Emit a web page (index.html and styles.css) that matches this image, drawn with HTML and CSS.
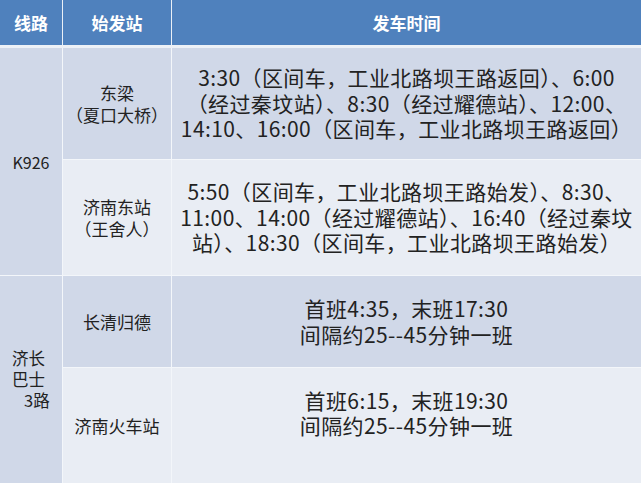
FILE: index.html
```html
<!DOCTYPE html>
<html lang="zh-CN">
<head>
<meta charset="utf-8">
<title>公交时刻表</title>
<link rel="stylesheet" href="styles.css">
</head>
<body>
<div class="table">
  <div class="head">
    <div class="hcell">线路</div>
    <div class="hcell">始发站</div>
    <div class="hcell">发车时间</div>
  </div>
  <div class="body">
    <div class="cell route r12 dark">K926</div>
    <div class="cell station dark"><span class="ln">东梁</span><span class="ln">（夏口大桥）</span></div>
    <div class="cell times dark">
      <span class="ln">3:30（区间车，工业北路坝王路返回）、6:00</span>
      <span class="ln">（经过秦坟站）、8:30（经过耀德站）、12:00、</span>
      <span class="ln">14:10、16:00（区间车，工业北路坝王路返回）</span>
    </div>
    <div class="cell station light"><span class="ln">济南东站</span><span class="ln">（王舍人）</span></div>
    <div class="cell times light">
      <span class="ln">5:50（区间车，工业北路坝王路始发）、8:30、</span>
      <span class="ln">11:00、14:00（经过耀德站）、16:40（经过秦坟</span>
      <span class="ln">站）、18:30（区间车，工业北路坝王路始发）</span>
    </div>
    <div class="cell route r34 dark bus"><span class="ln">济长</span><span class="ln">巴士</span><span class="ln indent">3路</span></div>
    <div class="cell station dark"><span class="ln">长清归德</span></div>
    <div class="cell times dark">
      <span class="ln">首班4:35，末班17:30</span>
      <span class="ln">间隔约25--45分钟一班</span>
    </div>
    <div class="cell station light"><span class="ln">济南火车站</span></div>
    <div class="cell times light last">
      <span class="ln">首班6:15，末班19:30</span>
      <span class="ln">间隔约25--45分钟一班</span>
    </div>
  </div>
</div>
</body>
</html>
```
FILE: styles.css
```css
html, body {
  margin: 0;
  padding: 0;
  background: #ffffff;
}
body {
  font-family: "Noto Sans CJK SC", "Noto Sans", sans-serif;
  color: #222222;
}
.table {
  width: 641px;
  height: 483px;
}
.head {
  display: grid;
  grid-template-columns: 62px 108px 1fr;
  column-gap: 1px;
  height: 45px;
  background: #eaf0f7;
  border-bottom: 3px solid #edf1f7;
}
.hcell {
  background: #4f81bd;
  color: #ffffff;
  font-weight: bold;
  font-size: 17px;
  display: flex;
  align-items: center;
  justify-content: center;
}
.body {
  display: grid;
  grid-template-columns: 62px 108px 1fr;
  grid-template-rows: 111px 115px 91px 115px;
  gap: 1px;
  background: #f3f6fa;
}
.cell {
  display: flex;
  flex-direction: column;
  align-items: center;
  justify-content: center;
  text-align: center;
}
.ln {
  display: block;
  white-space: nowrap;
}
.dark { background: #d0d8e8; }
.light { background: #e9edf4; }
.route {
  font-size: 16px;
}
.r12 { grid-row: 1 / span 2; grid-column: 1; }
.r34 { grid-row: 3 / span 2; grid-column: 1; }
.bus {
  align-items: flex-start;
  padding-left: 12px;
  font-size: 16.5px;
}
.bus .ln {
  line-height: 21px;
}
.bus .indent {
  padding-left: 12px;
}
.station {
  font-size: 17px;
}
.station .ln {
  line-height: 22px;
}
.times {
  font-size: 21px;
  letter-spacing: 0.4px;
}
.times .ln {
  line-height: 25.5px;
}
.last {
  padding-bottom: 25px;
}
```
